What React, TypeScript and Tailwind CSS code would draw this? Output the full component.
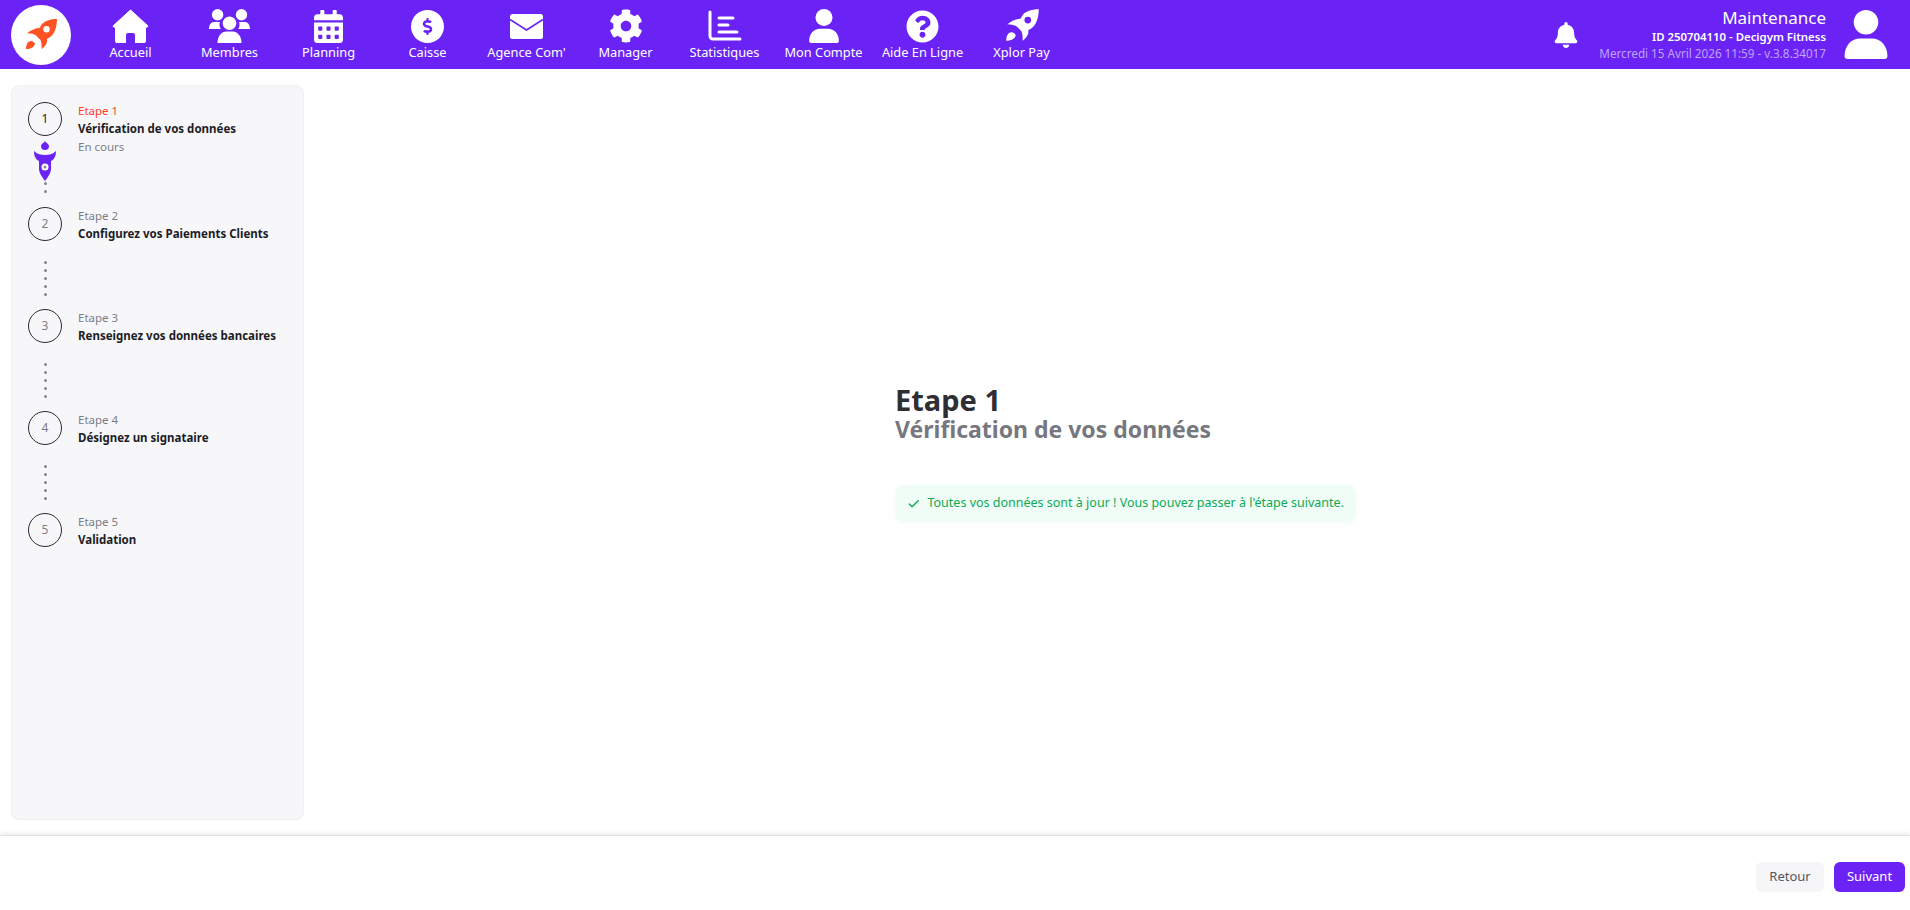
import type { ReactNode } from "react";
import { Check } from "lucide-react";
import { FaBell, FaCalendarAlt, FaCog, FaDollarSign, FaQuestionCircle } from "react-icons/fa";

const FONT = "font-['Noto_Sans','Open_Sans',sans-serif]";

function HomeIcon() {
  return (
    <svg viewBox="0 0 37 34" className="h-[34px] w-[37px]" fill="white">
      <path
        d="M18.500 1 35.500 16.500a1 1 0 0 1-.7 1.700H33.500V32a2 2 0 0 1-2 2H23.500V26a2.500 2.500 0 0 0-2.500-2.500h-5A2.500 2.500 0 0 0 13.500 26v8H5.500a2 2 0 0 1-2-2V18.200H2.200a1 1 0 0 1-.7-1.700z"
        stroke="white"
        strokeLinejoin="round"
      />
    </svg>
  );
}

function MembersIcon() {
  return (
    <svg viewBox="0 0 41 34" className="h-[34px] w-[41px]" fill="white">
      <circle cx="8.600" cy="5.700" r="5.700" />
      <circle cx="32.500" cy="5.700" r="5.700" />
      <circle cx="20.500" cy="14.300" r="6.800" />
      <path d="M8.500 34c0-7 4-11.500 9-11.500h6c5 0 9 4.500 9 11.500z" />
      <path d="M0 20c0-4 2-7 5-7h6c-.5 1-.5 2-.5 3 0 1.500.5 3 1.500 4z" />
      <path d="M41 20c0-4-2-7-5-7h-6c.5 1 .5 2 .5 3 0 1.500-.5 3-1.500 4z" />
    </svg>
  );
}

function CaisseIcon() {
  return (
    <div className="flex h-[33px] w-[33px] items-center justify-center rounded-full bg-white">
      <FaDollarSign className="text-[17px] text-[#6a23f4]" />
    </div>
  );
}

function MailIcon() {
  return (
    <svg viewBox="0 0 33 25" className="h-[25px] w-[33px]">
      <rect width="33" height="25" rx="2.500" fill="white" />
      <path d="M0 5.500 16.500 16 33 5.500" fill="none" stroke="#6a23f4" strokeWidth="1.500" />
    </svg>
  );
}

function StatsIcon() {
  return (
    <svg viewBox="0 0 34 32" className="h-[32px] w-[34px]" fill="none" stroke="white" strokeLinecap="round">
      <path d="M2 2v24a3 3 0 0 0 3 3h27" strokeWidth="3" />
      <path d="M11 8h14" strokeWidth="3" />
      <path d="M11 15h9" strokeWidth="3" />
      <path d="M11 22h18" strokeWidth="3" />
    </svg>
  );
}

function UserIcon({ className }: { className: string }) {
  return (
    <svg viewBox="0 0 42 48" className={className} fill="white">
      <circle cx="21" cy="12" r="12" />
      <path d="M0 45c0-10 7-17 15-17h12c8 0 15 7 15 17a3 3 0 0 1-3 3H3a3 3 0 0 1-3-3z" />
    </svg>
  );
}

function RocketIcon({ className, color, hole }: { className: string; color: string; hole: string }) {
  return (
    <svg viewBox="0 0 40 40" className={className} fill={color}>
      <path d="M36 4C29 4 24 6 21 9L18.500 13C15 13 10 15 6 18.300C10 18.500 13 19 15 20.500L19.500 25C20.500 27 20.700 31 20.700 34C23 32.500 25 30 26 27L26 24C30 22 33 19 34.500 14C35.500 11 36 7 36 4Z" />
      <path d="M5 34c0-5 2-8 5-8 2 0 4 2 4 3-1 3-4 5-9 5z" />
      <circle cx="25.500" cy="14.300" r="3.200" fill={hole} />
    </svg>
  );
}

const navItems: { label: string; icon: ReactNode }[] = [
  { label: "Accueil", icon: <HomeIcon /> },
  { label: "Membres", icon: <MembersIcon /> },
  { label: "Planning", icon: <FaCalendarAlt className="text-[33px]" /> },
  { label: "Caisse", icon: <CaisseIcon /> },
  { label: "Agence Com'", icon: <MailIcon /> },
  { label: "Manager", icon: <FaCog className="text-[34px]" /> },
  { label: "Statistiques", icon: <StatsIcon /> },
  { label: "Mon Compte", icon: <UserIcon className="h-[34px] w-[30px]" /> },
  { label: "Aide En Ligne", icon: <FaQuestionCircle className="text-[33px]" /> },
  { label: "Xplor Pay", icon: <RocketIcon className="h-[42px] w-[42px]" color="white" hole="#6a23f4" /> },
];

const steps = [
  { n: 1, title: "Vérification de vos données" },
  { n: 2, title: "Configurez vos Paiements Clients" },
  { n: 3, title: "Renseignez vos données bancaires" },
  { n: 4, title: "Désignez un signataire" },
  { n: 5, title: "Validation" },
];

function Dots({ count }: { count: number }) {
  return (
    <div className="flex flex-col items-center gap-[5px]">
      {Array.from({ length: count }).map((_, i) => (
        <span key={i} className="h-[3px] w-[3px] rounded-full bg-[#85858f]" />
      ))}
    </div>
  );
}

function SmallRocket() {
  return (
    <svg viewBox="0 0 22 40" className="mt-[5px] h-[40px] w-[22px] shrink-0">
      <path d="M11 0c1 2 4 3 4 5a4 4 0 0 1-8 0c0-2 3-3 4-5z" fill="#6a23f4" />
      <path
        d="M0 10c3 3 7 4 11 4s8-1 11-4c0 4-1 8-5 10v8c0 4-3 8-6 12-3-4-6-8-6-12v-8C1 18 0 14 0 10z"
        fill="#6a23f4"
      />
      <circle cx="11" cy="26" r="3.500" fill="white" />
      <circle cx="11" cy="26" r="1.500" fill="#85858f" />
    </svg>
  );
}

export default function App() {
  return (
    <div className={`flex h-[910px] w-full flex-col overflow-hidden bg-white ${FONT}`}>
      {/* Barre du haut */}
      <header className="flex h-[69px] shrink-0 items-center bg-[#6a23f4] text-white">
        <div className="ml-[11px] flex h-[60px] w-[60px] items-center justify-center rounded-full bg-white">
          <RocketIcon className="h-[40px] w-[40px]" color="#ff5325" hole="white" />
        </div>
        <nav className="ml-[10px] flex">
          {navItems.map((item) => (
            <div key={item.label} className="flex h-[69px] w-[99px] flex-col items-center pt-[9px]">
              <div className="flex h-[34px] items-center justify-center">{item.icon}</div>
              <span className="text-[12.8px] leading-[18px] whitespace-nowrap">{item.label}</span>
            </div>
          ))}
        </nav>
        <div className="ml-auto flex items-center">
          <FaBell className="mr-[20px] text-[26px]" />
          <div className="flex flex-col items-end">
            <span className="text-[17px] leading-[20px]">Maintenance</span>
            <span className="text-[11.4px] leading-[17px] font-semibold">ID 250704110 - Decigym Fitness</span>
            <span className="text-[11.7px] leading-[17px] text-[#c0a2fb]">Mercredi 15 Avril 2026 11:59 - v.3.8.34017</span>
          </div>
          <UserIcon className="mr-[22px] ml-[18px] h-[49px] w-[44px]" />
        </div>
      </header>

      {/* Contenu */}
      <div className="flex min-h-0 flex-1">
        <aside className="mt-[16px] ml-[11px] flex h-[735px] w-[293px] shrink-0 flex-col rounded-lg border border-[#f0f0f4] bg-[#f7f7fa] pt-[16px] pl-[16px]">
          {steps.map((step) => (
            <div key={step.n} className={`flex gap-[16px] ${step.n === 1 ? "h-[105px]" : "h-[102px]"}`}>
              <div className="flex w-[34px] flex-col items-center">
                <div
                  className={`flex h-[34px] w-[34px] shrink-0 items-center justify-center rounded-full border border-[#2a2a30] text-[12px] ${
                    step.n === 1 ? "text-[#1d1d26]" : "text-[#7d7d87]"
                  }`}
                >
                  {step.n}
                </div>
                {step.n === 1 && (
                  <>
                    <SmallRocket />
                    <div className="mt-[1px]">
                      <Dots count={2} />
                    </div>
                  </>
                )}
                {step.n > 1 && step.n < 5 && (
                  <div className="mt-[20px]">
                    <Dots count={5} />
                  </div>
                )}
              </div>
              <div className="flex flex-col text-[11.5px] leading-[18px]">
                <span className={step.n === 1 ? "text-[#ff3b2f]" : "text-[#7d7d87]"}>Etape {step.n}</span>
                <span className="font-bold text-[#1d1d26]">{step.title}</span>
                {step.n === 1 && <span className="text-[#7d7d87]">En cours</span>}
              </div>
            </div>
          ))}
        </aside>

        <main className="flex flex-1 items-start pt-[316px] pl-[591px]">
          <div className="flex w-[461px] flex-col">
            <h1 className="text-[29px] leading-[30px] font-bold text-[#2f2f33]">Etape 1</h1>
            <h2 className="text-[23px] leading-[28px] font-bold text-[#77777f]">Vérification de vos données</h2>
            <div className="mt-[42px] flex h-[37px] items-center gap-[7px] rounded-lg bg-[#f0fdf6] px-[12px] text-[12.5px] whitespace-nowrap text-[#0fa958] shadow-[0_2px_6px_rgba(15,169,88,0.04)]">
              <Check className="h-[14px] w-[14px]" strokeWidth={2.5} />
              <span>Toutes vos données sont à jour ! Vous pouvez passer à l'étape suivante.</span>
            </div>
          </div>
        </main>
      </div>

      {/* Pied de page */}
      <footer className="flex h-[75px] shrink-0 items-center justify-end gap-[10px] border-t border-[#e4e4e4] pt-[7px] pr-[5px] shadow-[0_-2px_4px_rgba(0,0,0,0.08)]">
        <button className="h-[30px] w-[68px] rounded-md bg-[#f6f6f9] text-[13px] text-[#55555f]">Retour</button>
        <button className="h-[30px] w-[71px] rounded-md bg-[#6a23f4] text-[13px] text-white">Suivant</button>
      </footer>
    </div>
  );
}
